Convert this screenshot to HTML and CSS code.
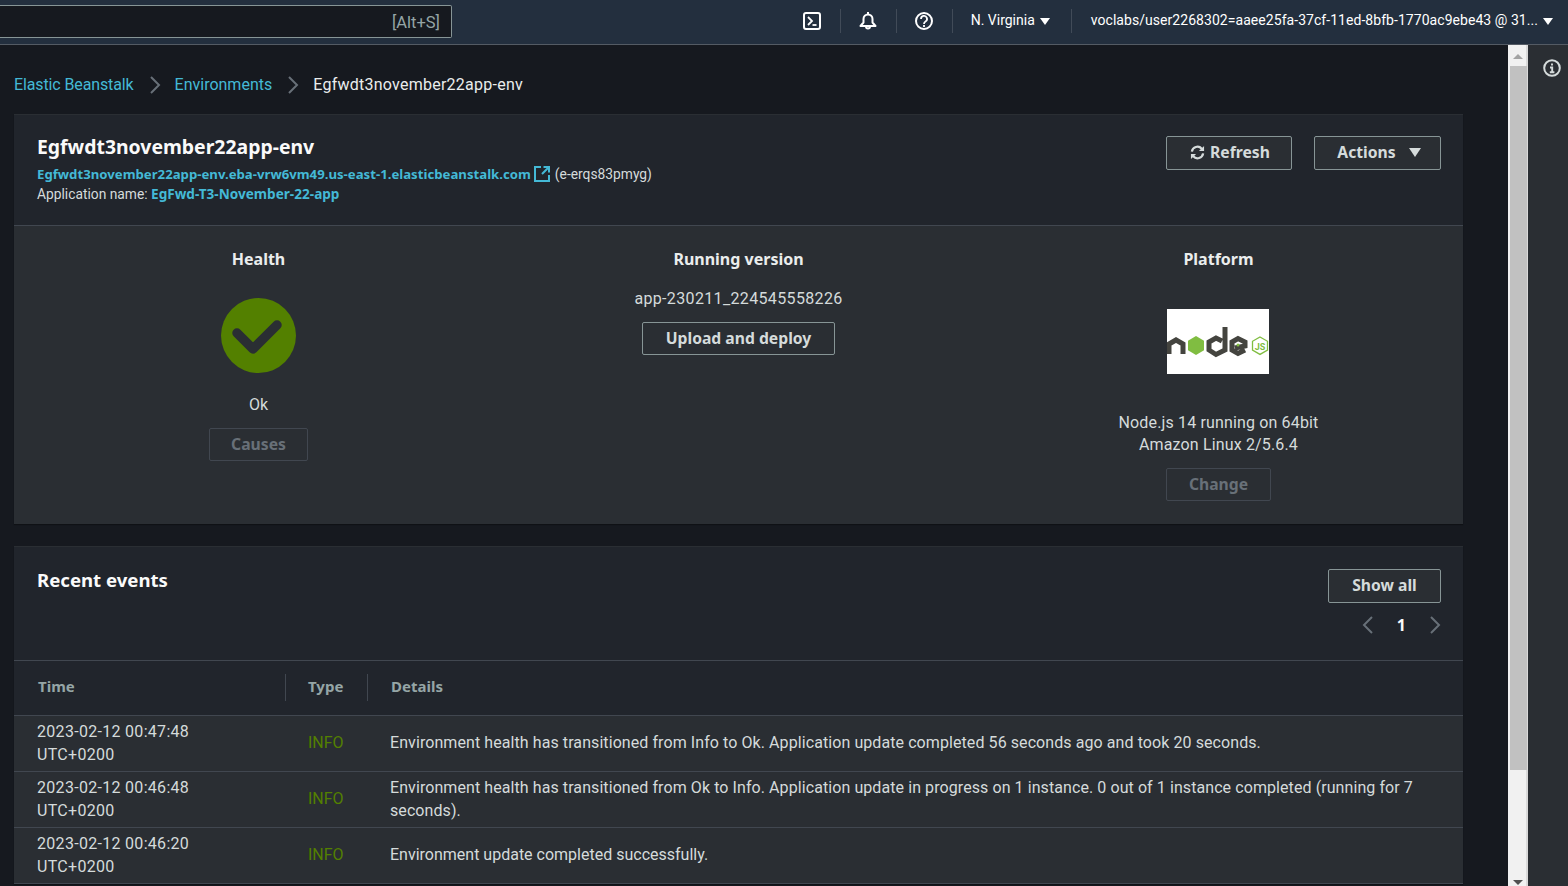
FILE: index.html
```html
<!DOCTYPE html>
<html lang="en">
<head>
    <meta charset="UTF-8">
    <title>Elastic Beanstalk</title>
    <link rel="stylesheet" href="styles.css">
</head>
<body>

<header class="topnav">
    <div class="search"><span>[Alt+S]</span></div>
    <div class="nav-right">
        <a class="nav-icon nav-icon-first">
            <svg width="20" height="20" viewBox="0 0 20 20" fill="none" stroke="#fff" stroke-width="2"><rect x="2" y="2" width="16" height="16" rx="2"/><path d="M6 6l4 4-4 4" stroke-width="1.8"/><path d="M10.500 14h4" stroke-width="1.8"/></svg>
        </a>
        <a class="nav-icon">
            <svg width="20" height="20" viewBox="0 0 20 20" fill="none" stroke="#fff" stroke-width="2"><path d="M2.500 15l3-3.500V8a4.500 4.500 0 0 1 9 0v3.500l3 3.500z" stroke-linejoin="round"/><path d="M8 15.500a2 2 0 0 0 4 0"/><path d="M10 1v2"/></svg>
        </a>
        <a class="nav-icon">
            <svg width="20" height="20" viewBox="0 0 20 20" fill="none" stroke="#fff" stroke-width="2"><circle cx="10" cy="10" r="8"/><path d="M7 8a3 3 0 1 1 4.500 2.500c-1 .6-1.500 1-1.500 2.500" stroke-width="1.800"/><path d="M10 14v2" stroke-width="1.800"/></svg>
        </a>
        <a class="nav-menu nav-region">N. Virginia <i class="caret"></i></a>
        <a class="nav-menu nav-user"><span class="user-name">voclabs/user2268302=aaee25fa-37cf-11ed-8bfb-1770ac9ebe43 @ 31...</span> <i class="caret"></i></a>
    </div>
</header>

<div class="shell">
    <main class="content">
        <nav class="breadcrumbs">
            <a href="#">Elastic Beanstalk</a>
            <svg class="crumb-sep" width="12" height="18" viewBox="0 0 12 18" fill="none" stroke="#687078" stroke-width="2"><path d="M2 1l8 8-8 8"/></svg>
            <a href="#">Environments</a>
            <svg class="crumb-sep" width="12" height="18" viewBox="0 0 12 18" fill="none" stroke="#687078" stroke-width="2"><path d="M2 1l8 8-8 8"/></svg>
            <span class="crumb-current">Egfwdt3november22app-env</span>
        </nav>

        <section class="card env-card">
            <div class="card-head env-head">
                <div>
                    <h1>Egfwdt3november22app-env</h1>
                    <p class="env-url">
                        <a href="#" class="strong-link">Egfwdt3november22app-env.eba-vrw6vm49.us-east-1.elasticbeanstalk.com</a>
                        <svg class="ext-icon" width="16" height="16" viewBox="0 0 16 16" fill="none" stroke="#44b9d6" stroke-width="2"><path d="M7 1H1v14h14V9"/><path d="M8 8l6.500-6.500M9.500 1H15v5.500"/></svg>
                        (e-erqs83pmyg)
                    </p>
                    <p class="env-app">Application name: <a href="#" class="strong-link">EgFwd-T3-November-22-app</a></p>
                </div>
                <div class="head-actions">
                    <button class="btn btn-refresh">
                        <svg width="15" height="15" viewBox="0 0 16 16" fill="none" stroke="#d5dbdb" stroke-width="2.400"><path d="M2 7a6 6 0 0 1 10.500-3L14 5.500"/><path d="M14 9a6 6 0 0 1-10.500 3L2 10.500"/><path d="M15 1v5.500H9.500" stroke-width="0" fill="#d5dbdb"/><path d="M1 15V9.500h5.500" stroke-width="0" fill="#d5dbdb"/></svg>
                        Refresh
                    </button>
                    <button class="btn btn-actions">Actions <i class="caret caret-big"></i></button>
                </div>
            </div>
            <div class="env-body">
                <div class="env-col col-health">
                    <h3>Health</h3>
                    <svg class="health-icon" width="75" height="75" viewBox="0 0 75 75"><circle cx="37.500" cy="37.500" r="37.500" fill="#538000"/><path d="M16 35l16 16 24-24" fill="none" stroke="#2a2e33" stroke-width="9.500" stroke-linecap="round" stroke-linejoin="round"/></svg>
                    <p class="ok-label">Ok</p>
                    <button class="btn btn-disabled btn-causes">Causes</button>
                </div>
                <div class="env-col col-version">
                    <h3>Running version</h3>
                    <p class="version-label">app-230211_224545558226</p>
                    <button class="btn btn-upload">Upload and deploy</button>
                </div>
                <div class="env-col col-platform">
                    <h3>Platform</h3>
                    <div class="node-logo">
                        <svg width="102" height="65" viewBox="0 0 102 65">
                            <g fill="none" stroke="#44443f" stroke-width="5">
                                <path d="M2 45v-10l7-4 7 4v10"/>
                                <path d="M58 18v23l-9 4.500-7-4.500v-8l7-4 6 3"/>
                                <path d="M78 41l-7 3.500-6-3.500v-8l6-3.500 7 3.500v4l-10 2"/>
                            </g>
                            <path d="M29 27l8 4.700v9.600l-8 4.700-8-4.700v-9.600z" fill="#80bd41"/>
                            <circle cx="71" cy="36" r="1.500" fill="#80bd41"/>
                            <path d="M93 28l7.500 4.300v8.800l-7.500 4.300-7.500-4.300v-8.800z" fill="none" stroke="#80bd41" stroke-width="1.300"/>
                            <text x="93" y="40.500" class="logo-js">JS</text>
                        </svg>
                    </div>
                    <p class="platform-label">Node.js 14 running on 64bit<br>Amazon Linux 2/5.6.4</p>
                    <button class="btn btn-disabled btn-change">Change</button>
                </div>
            </div>
        </section>

        <section class="card events-card">
            <div class="card-head events-head">
                <h2>Recent events</h2>
                <div class="events-tools">
                    <button class="btn btn-show">Show all</button>
                    <div class="pager">
                        <svg width="12" height="18" viewBox="0 0 12 18" fill="none" stroke="#687078" stroke-width="2"><path d="M10 1L2 9l8 8"/></svg>
                        <b>1</b>
                        <svg width="12" height="18" viewBox="0 0 12 18" fill="none" stroke="#687078" stroke-width="2"><path d="M2 1l8 8-8 8"/></svg>
                    </div>
                </div>
            </div>
            <table class="events">
                <thead>
                    <tr>
                        <th class="col-time"><span>Time</span></th>
                        <th class="col-type"><span>Type</span></th>
                        <th><span>Details</span></th>
                    </tr>
                </thead>
                <tbody>
                    <tr>
                        <td class="time">2023-02-12 00:47:48<br>UTC+0200</td>
                        <td class="info">INFO</td>
                        <td class="details one-line">Environment health has transitioned from Info to Ok. Application update completed 56 seconds ago and took 20 seconds.</td>
                    </tr>
                    <tr>
                        <td class="time">2023-02-12 00:46:48<br>UTC+0200</td>
                        <td class="info">INFO</td>
                        <td class="details">Environment health has transitioned from Ok to Info. Application update in progress on 1 instance. 0 out of 1 instance completed (running for 7 seconds).</td>
                    </tr>
                    <tr>
                        <td class="time">2023-02-12 00:46:20<br>UTC+0200</td>
                        <td class="info">INFO</td>
                        <td class="one-line">Environment update completed successfully.</td>
                    </tr>
                </tbody>
            </table>
        </section>
    </main>

    <div class="scrollbar">
        <i class="arrow-up"></i>
        <div class="thumb"></div>
        <i class="arrow-down"></i>
    </div>

    <aside class="side">
        <svg width="18" height="18" viewBox="0 0 18 18" fill="none" stroke="#d5dbdb" stroke-width="2"><circle cx="9" cy="9" r="7.800"/><path d="M9 4.500v2M7 8.500h2.200V13M6.800 13.200h4.600" stroke-width="1.900"/></svg>
    </aside>
</div>

</body>
</html>
```

FILE: styles.css
```css
* {
    box-sizing: border-box;
}
html, body {
    height: 100%;
}
body {
    margin: 0;
    overflow: hidden;
    display: flex;
    flex-direction: column;
    background-color: #16191f;
    color: #d5dbdb;
    font-family: Roboto, Arial, sans-serif;
    font-size: 16px;
    line-height: 22px;
}
a {
    color: #44b9d6;
    text-decoration: none;
}
p {
    margin: 0;
}

/* top bar */
.topnav {
    height: 45px;
    flex: none;
    display: flex;
    justify-content: space-between;
    background-color: #232f3e;
    border-bottom: 1px solid #545b64;
}
.search {
    width: 452px;
    height: 33px;
    margin-top: 5px;
    padding: 3px 11px 0 0;
    display: flex;
    align-items: center;
    justify-content: flex-end;
    background-color: #16191f;
    border: 1px solid #879596;
    border-left: none;
    border-radius: 0 2px 2px 0;
    color: #95a5a6;
    font-size: 16.500px;
}
.nav-right {
    display: flex;
    align-items: center;
    height: 40px;
    margin-top: 1px;
    color: #fff;
}
.nav-icon {
    width: 56px;
    height: 24px;
    display: flex;
    align-items: center;
    justify-content: center;
    border-left: 1px solid #414b58;
}
.nav-icon-first {
    border-left: none;
}
.nav-menu {
    height: 24px;
    padding-bottom: 2px;
    display: flex;
    align-items: center;
    gap: 5px;
    color: #fff;
    font-size: 14px;
    white-space: nowrap;
    border-left: 1px solid #414b58;
}
.nav-region {
    padding-left: 18px;
    padding-right: 21px;
}
.nav-user {
    padding-left: 19px;
    padding-right: 15px;
}
.user-name {
    letter-spacing: 0.05px;
}
.caret {
    display: inline-block;
    width: 0;
    height: 0;
    border-left: 5px solid transparent;
    border-right: 5px solid transparent;
    border-top: 7px solid currentColor;
    margin-top: 2px;
}
.caret-big {
    border-left-width: 6px;
    border-right-width: 6px;
    border-top-width: 9px;
    margin: 0 0 0 13px;
    vertical-align: 1px;
}

/* page frame */
.shell {
    flex: 1;
    display: flex;
    min-height: 0;
}
.content {
    flex: 1;
    min-width: 0;
    padding: 0 45px 0 14px;
    overflow: hidden;
}
.scrollbar {
    width: 20px;
    flex: none;
    position: relative;
    background-color: #f1f1f1;
    border-right: 2px solid #d9d9d9;
    padding: 21px 0 0 2px;
}
.thumb {
    width: 17px;
    height: 704px;
    background-color: #c1c1c1;
}
.arrow-up, .arrow-down {
    position: absolute;
    left: 5px;
    width: 0;
    height: 0;
    border-left: 5px solid transparent;
    border-right: 5px solid transparent;
}
.arrow-up {
    top: 9px;
    border-bottom: 5px solid #a3a3a3;
}
.arrow-down {
    bottom: 1px;
    border-top: 5px solid #505050;
}
.side {
    width: 40px;
    flex: none;
    background-color: #2a2e33;
    padding: 14px 0 0 15px;
}

/* breadcrumbs */
.breadcrumbs {
    height: 69px;
    padding-top: 28px;
    display: flex;
    align-items: flex-start;
    font-size: 16px;
    line-height: 24px;
    color: #eaeded;
}
.breadcrumbs a:first-child {
    letter-spacing: -0.12px;
}
.crumb-sep {
    margin: 3px 14px 0 15px;
}
.crumb-current {
    letter-spacing: 0.25px;
}

/* cards */
.card {
    background-color: #2a2e33;
    border-top: 1px solid #2a2e33;
    box-shadow: 0 1px 1px rgba(0, 0, 0, 0.3);
}
.card-head {
    background-color: #21252c;
    display: flex;
    justify-content: space-between;
    padding: 21px 22px 0 23px;
}
.env-head {
    height: 111px;
    border-bottom: 1px solid #414750;
}
h1, h2 {
    margin: 0;
    color: #fafafa;
    font-family: "Noto Sans", Arial, sans-serif;
    line-height: 24px;
    font-weight: 700;
}
h1 {
    margin-top: -1px;
    font-size: 19.400px;
}
h2 {
    font-size: 18.600px;
}
.env-url {
    margin-top: 5px;
    font-size: 13.800px;
    line-height: 20px;
    display: flex;
    align-items: center;
    gap: 4px;
}
.env-url .strong-link {
    font-size: 13.200px;
}
.env-app {
    font-size: 13.800px;
    line-height: 20px;
}
.strong-link {
    font-family: "Noto Sans", Arial, sans-serif;
    font-size: 13.600px;
    font-weight: 700;
}
.ext-icon {
    margin: 0 1px 0 -1px;
}
.head-actions {
    display: flex;
    gap: 22px;
}

/* buttons */
.btn {
    height: 34px;
    padding: 0 0 2px;
    background-color: #2a2e33;
    border: 1px solid #879596;
    border-radius: 2px;
    color: #d5dbdb;
    font: 700 15.700px/22px "Noto Sans", Arial, sans-serif;
    display: inline-flex;
    align-items: center;
    justify-content: center;
    white-space: nowrap;
}
.btn-refresh {
    width: 126px;
    gap: 5px;
    padding-left: 2px;
}
.btn-actions {
    width: 127px;
    padding-left: 3px;
}
.btn-disabled {
    background-color: transparent;
    border-color: #414750;
    color: #687078;
}
.btn-upload {
    width: 193px;
    margin-top: 12px;
    height: 33px;
}
.btn-causes {
    width: 99px;
    height: 33px;
    margin-top: 12px;
}
.btn-change {
    width: 105px;
    height: 33px;
    margin-top: 12px;
}
.btn-show {
    width: 113px;
}

/* environment summary */
.env-body {
    height: 298px;
    display: flex;
    padding-top: 22px;
}
.env-col {
    display: flex;
    flex-direction: column;
    align-items: center;
    text-align: center;
}
.col-health {
    width: 489px;
}
.col-version {
    width: 471px;
}
.col-platform {
    width: 489px;
}
h3 {
    margin: 0;
    color: #eaeded;
    font-family: "Noto Sans", Arial, sans-serif;
    font-size: 16px;
    line-height: 22px;
    font-weight: 700;
}
.health-icon {
    margin-top: 28px;
}
.ok-label {
    margin-top: 21px;
}
.version-label {
    margin-top: 18px;
    letter-spacing: 0.35px;
}
.node-logo {
    width: 102px;
    height: 65px;
    margin: 39px 2px 0 0;
    background-color: #fff;
    overflow: hidden;
}
.logo-js {
    font-family: Roboto, Arial, sans-serif;
    font-size: 9px;
    font-weight: 700;
    fill: #80bd41;
    text-anchor: middle;
}
.platform-label {
    margin-top: 38px;
    letter-spacing: 0.15px;
}

/* events */
.events-card {
    margin-top: 22px;
}
.events-head {
    height: 114px;
    border-bottom: 1px solid #414750;
}
.events-tools {
    display: flex;
    flex-direction: column;
    align-items: flex-end;
    padding-top: 1px;
}
.pager {
    display: flex;
    align-items: center;
    gap: 23px;
    margin-top: 11px;
    color: #fafafa;
    font-family: "Noto Sans", Arial, sans-serif;
    font-size: 16px;
}
.events {
    width: 100%;
    border-collapse: collapse;
    table-layout: fixed;
}
.events th {
    height: 54px;
    padding: 0;
    text-align: left;
    color: #95a5a6;
    font-family: "Noto Sans", Arial, sans-serif;
    font-size: 15px;
    font-weight: 700;
    background-color: #21252c;
    border-bottom: 1px solid #414750;
}
.events th span {
    display: block;
    padding: 0 0 2px 23px;
    line-height: 25px;
    border-left: 1px solid #414750;
}
.events th:first-child span {
    padding-left: 24px;
    border-left: none;
}
.events th.col-type span {
    padding-left: 22px;
}
.col-time {
    width: 271px;
}
.col-type {
    width: 82px;
}
.events td {
    height: 56px;
    padding: 4px 46px 4px 23px;
    border-bottom: 1px solid #414750;
    line-height: 23px;
    vertical-align: middle;
}
.events td.time {
    letter-spacing: 0.3px;
}
.events td.details {
    letter-spacing: 0.08px;
}
.events td.info {
    color: #538000;
    padding-right: 0;
    padding-bottom: 6px;
}
.events td.one-line {
    padding-bottom: 6px;
}
```
